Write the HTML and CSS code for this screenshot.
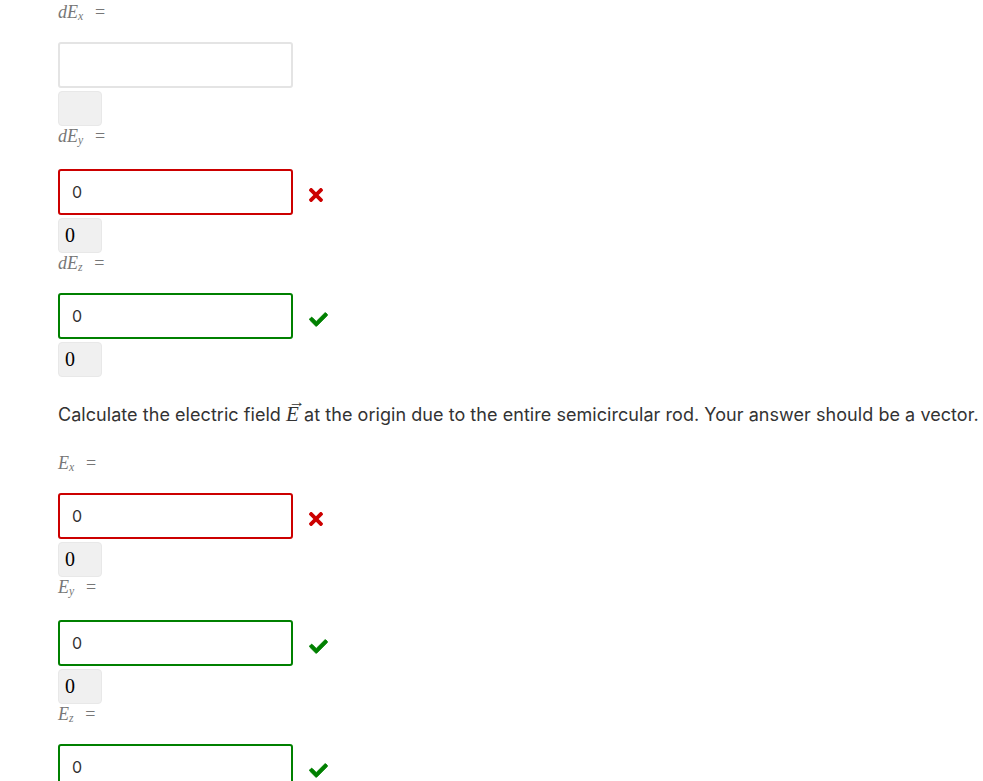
FILE: index.html
```html
<!DOCTYPE html>
<html lang="en">
<head>
    <meta charset="UTF-8">
    <meta name="viewport" content="width=device-width, initial-scale=1.0">
    <title>Electric field of a semicircular rod</title>
    <link rel="stylesheet" href="styles.css">
</head>
<body>

    <div class="question">

        <!-- dE components -->
        <div class="part">
            <div class="label"><i>dE</i><sub>x</sub><span class="eq">=</span></div>
            <div class="answer-row">
                <input class="answer" type="text" value="">
            </div>
            <div class="preview"></div>
        </div>

        <div class="part">
            <div class="label deep"><i>dE</i><sub>y</sub><span class="eq">=</span></div>
            <div class="answer-row">
                <input class="answer wrong" type="text" value="0">
                <svg class="mark mark-wrong" viewBox="0 80 352 352" width="14" height="14">
                    <path d="M242.72 256l100.07-100.07c12.28-12.28 12.28-32.19 0-44.48l-22.24-22.24c-12.28-12.28-32.19-12.28-44.48 0L176 189.28 75.93 89.21c-12.28-12.28-32.19-12.28-44.48 0L9.21 111.45c-12.28 12.28-12.28 32.19 0 44.48L109.28 256 9.21 356.07c-12.28 12.28-12.28 32.19 0 44.48l22.24 22.24c12.28 12.28 32.2 12.28 44.48 0L176 322.72l100.07 100.07c12.28 12.28 32.2 12.28 44.48 0l22.240-22.24c12.28-12.28 12.28-32.19 0-44.48L242.72 256z"/>
                </svg>
            </div>
            <div class="preview">0</div>
        </div>

        <div class="part">
            <div class="label"><i>dE</i><sub>z</sub><span class="eq">=</span></div>
            <div class="answer-row">
                <input class="answer correct" type="text" value="0">
                <svg class="mark mark-right" viewBox="-14 51 540 410" width="19" height="15">
                    <path d="M173.898 439.404l-166.4-166.4c-9.997-9.997-9.997-26.206 0-36.204l36.203-36.204c9.997-9.998 26.207-9.998 36.204 0L192 312.69 432.095 72.596c9.997-9.997 26.207-9.997 36.204 0l36.203 36.204c9.997 9.997 9.997 26.206 0 36.204l-294.4 294.401c-9.998 9.997-26.207 9.997-36.204-.001z"/>
                </svg>
            </div>
            <div class="preview">0</div>
        </div>

        <p class="prompt">Calculate the electric field <span class="vec">E</span> at the origin due to the entire semicircular rod. Your answer should be a vector.</p>

        <!-- E components -->
        <div class="part">
            <div class="label"><i>E</i><sub>x</sub><span class="eq">=</span></div>
            <div class="answer-row">
                <input class="answer wrong" type="text" value="0">
                <svg class="mark mark-wrong" viewBox="0 80 352 352" width="14" height="14">
                    <path d="M242.72 256l100.07-100.07c12.28-12.28 12.28-32.19 0-44.48l-22.24-22.24c-12.28-12.28-32.19-12.28-44.48 0L176 189.28 75.93 89.21c-12.28-12.28-32.19-12.28-44.48 0L9.21 111.45c-12.28 12.28-12.28 32.19 0 44.48L109.28 256 9.21 356.07c-12.28 12.28-12.28 32.19 0 44.48l22.24 22.24c12.28 12.28 32.2 12.28 44.48 0L176 322.72l100.07 100.07c12.28 12.28 32.2 12.28 44.48 0l22.24-22.24c12.28-12.28 12.28-32.19 0-44.48L242.72 256z"/>
                </svg>
            </div>
            <div class="preview">0</div>
        </div>

        <div class="part">
            <div class="label deep"><i>E</i><sub>y</sub><span class="eq">=</span></div>
            <div class="answer-row">
                <input class="answer correct" type="text" value="0">
                <svg class="mark mark-right" viewBox="-14 51 540 410" width="19" height="15">
                    <path d="M173.898 439.404l-166.4-166.4c-9.997-9.997-9.997-26.206 0-36.204l36.203-36.204c9.997-9.998 26.207-9.998 36.204 0L192 312.69 432.095 72.596c9.997-9.997 26.207-9.997 36.204 0l36.203 36.204c9.997 9.997 9.997 26.206 0 36.204l-294.4 294.401c-9.998 9.997-26.207 9.997-36.204-.001z"/>
                </svg>
            </div>
            <div class="preview">0</div>
        </div>

        <div class="part">
            <div class="label"><i>E</i><sub>z</sub><span class="eq">=</span></div>
            <div class="answer-row">
                <input class="answer correct" type="text" value="0">
                <svg class="mark mark-right" viewBox="-14 51 540 410" width="19" height="15">
                    <path d="M173.898 439.404l-166.4-166.4c-9.997-9.997-9.997-26.206 0-36.204l36.203-36.204c9.997-9.998 26.207-9.998 36.204 0L192 312.69 432.095 72.596c9.997-9.997 26.207-9.997 36.204 0l36.203 36.204c9.997 9.997 9.997 26.206 0 36.204l-294.4 294.401c-9.998 9.997-26.207 9.997-36.204-.001z"/>
                </svg>
            </div>
            <div class="preview">0</div>
        </div>

    </div>

</body>
</html>
```

FILE: styles.css
```css
body {
    margin: 0;
    padding: 2px 0 0 58px;
    background: #fff;
    color: #333;
    font-family: Inter, "Noto Sans", sans-serif;
    font-size: 16px;
}

/* math labels (dE_x = etc.) */
.label {
    height: 20px;
    line-height: 20px;
    margin-bottom: 20px;
    color: #777;
    font-family: "Liberation Serif", serif;
    font-size: 18px;
}

.label.deep {
    padding-bottom: 3px;
}

.label i {
    font-style: italic;
}

.label sub {
    font-style: italic;
    font-size: 0.65em;
    line-height: 0;
    vertical-align: -0.2em;
}

.label .eq {
    margin-left: 0.65em;
}

.answer-row {
    display: flex;
    align-items: center;
}

.answer {
    box-sizing: border-box;
    width: 235px;
    height: 46px;
    margin: 0;
    padding: 0 12px;
    border: 2px solid #e4e4e4;
    border-radius: 3px;
    background: #fff;
    color: #333;
    font-family: Inter, "Noto Sans", sans-serif;
    font-size: 16px;
    outline: none;
}

.answer.wrong {
    border-color: #c00;
}

.answer.correct {
    border-color: #008000;
}

.mark {
    margin-left: 16px;
    margin-top: 6px; /* sits a little below centre */
}

.mark-wrong {
    fill: #c00;
}

.mark-right {
    fill: #008000;
    stroke: #008000;
    stroke-width: 26;
    stroke-linejoin: round;
}

.preview {
    box-sizing: border-box;
    width: 44px;
    height: 35px;
    margin-top: 3px;
    padding-left: 6px;
    border: 1px solid #e8e8e8;
    border-radius: 4px;
    background: #f0f0f0;
    color: #000;
    font-family: "Liberation Serif", serif;
    font-size: 20px;
    line-height: 33px;
}

.prompt {
    margin: 26px 0;
    font-size: 18px;
    line-height: 24px;
    letter-spacing: 0.05px;
    white-space: nowrap;
}

.vec {
    position: relative;
    display: inline-block;
    font-family: "Liberation Serif", serif;
    font-style: italic;
    font-size: 21px;
    line-height: 1;
}

/* arrow accent over the vector symbol */
.vec::before {
    content: "\2192";
    position: absolute;
    top: -0.6em;
    left: 0.15em;
    font-style: normal;
    font-size: 0.8em;
}
```
